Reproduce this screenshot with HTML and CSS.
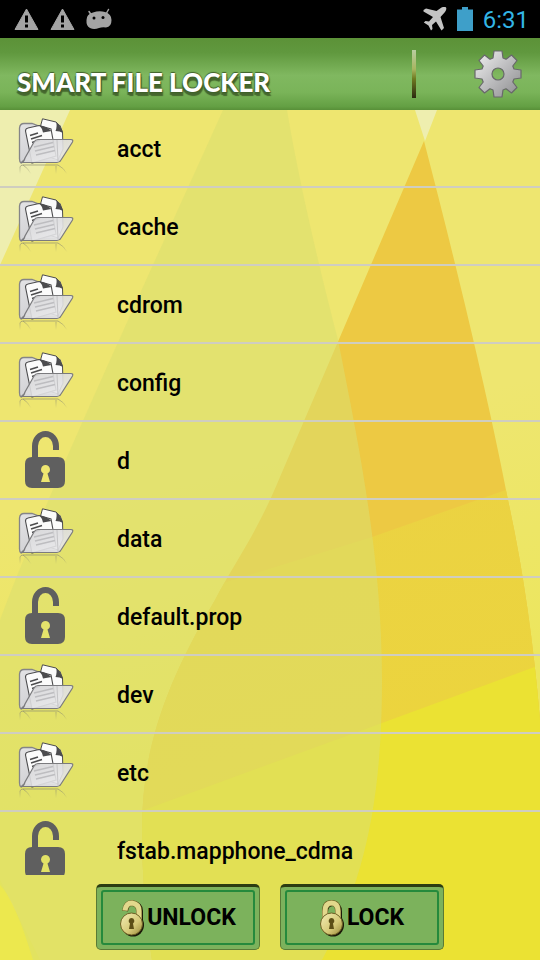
FILE: index.html
```html
<!DOCTYPE html>
<html lang="en">
<head>
    <meta charset="UTF-8">
    <meta name="viewport" content="width=device-width, initial-scale=1">
    <title>Smart File Locker</title>
    <link rel="stylesheet" href="styles.css">
</head>
<body>
    <svg class="defs" width="0" height="0" aria-hidden="true">
        <defs>
            <linearGradient id="folderBack" x1="0" y1="0" x2="1" y2="1">
                <stop offset="0" stop-color="#e4e4e6"/>
                <stop offset="1" stop-color="#c4c4c8"/>
            </linearGradient>
            <linearGradient id="folderFront" x1="0" y1="0" x2="1" y2="1">
                <stop offset="0" stop-color="#d2d2d4"/>
                <stop offset="1" stop-color="#ececee"/>
            </linearGradient>
            <linearGradient id="gold" x1="0" y1="0" x2="1" y2="1">
                <stop offset="0" stop-color="#f3edb4"/>
                <stop offset="0.6" stop-color="#d6c977"/>
                <stop offset="1" stop-color="#978838"/>
            </linearGradient>
            <linearGradient id="steel" x1="0" y1="0" x2="1" y2="1">
                <stop offset="0" stop-color="#f2f2f2"/>
                <stop offset="0.5" stop-color="#bdbdbf"/>
                <stop offset="1" stop-color="#8c8c8e"/>
            </linearGradient>
            <linearGradient id="fadeOut" x1="0" y1="0" x2="0" y2="1">
                <stop offset="0" stop-color="#8c8c70" stop-opacity="0.7"/>
                <stop offset="1" stop-color="#8c8c70" stop-opacity="0"/>
            </linearGradient>
        </defs>
        <symbol id="folder" viewBox="0 0 58 60">
            <path d="M3 45 Q1.500 44 1.500 41 V10 Q2 5.500 6 5.500 H14 L21 8 H42 V43 H5Z" fill="url(#folderBack)" stroke="#858588" stroke-width="1.300"/>
            <path d="M24.500 0.800 L38 4 Q43 7 44.500 14 L45 31 L40 42 L28 38 L22 10Z" fill="#fbfbfb" stroke="#4c4c4e" stroke-width="1"/>
            <path d="M38 4 Q43 8 45 15 Q42 13 37.500 13 Q39.500 8 38 4Z" fill="#4c4c4e"/>
            <path d="M7.500 13 Q7.500 10.500 10 10 L21 7.500 L33 11 L38 38 L14 45Z" fill="#fbfbfb" stroke="#4c4c4e" stroke-width="1.100"/>
            <path d="M21.500 7.500 Q28 8 33.500 13 L25 14.500 Q24 10 21.500 7.500Z" fill="#4c4c4e"/>
            <path d="M12 17.500 L20 15 M13 21 L24 17.500 M14 24.500 L22 22" stroke="#4c4c4e" stroke-width="1.500"/>
            <path d="M3 45 Q6 44 7 40 L16 24 Q17.500 21.500 20 21.500 H53 Q55.500 21.500 54.500 24 L43 42 Q41.500 44.500 39 44.500 H4Z" fill="url(#folderFront)" fill-opacity="0.900" stroke="#7b7b7e" stroke-width="1.200"/>
            <path d="M16 29 L35 24.500 M17 33 L36 28.500 M18 37 L37 32.500" stroke="#bdbdc0" stroke-width="1.400"/>
            <path d="M39 22 L40 43" stroke="#c4c4c6" stroke-width="1"/>
            <path d="M2 56 V49 Q2.500 47 5 47 Q10 50 13 56 M5 47 H40 Q46 50 49 56 M38 48 V56" fill="none" stroke="url(#fadeOut)" stroke-width="1"/>
        </symbol>
        <symbol id="unlocked" viewBox="0 0 42 58">
            <path d="M11 28 V15 A10.500 12 0 0 1 32 15 V19" fill="none" stroke="#5f5f5f" stroke-width="6"/>
            <path fill="#5f5f5f" fill-rule="evenodd" d="M8 26 H34 Q41 26 41 33 V50 Q41 57 34 57 H8 Q1 57 1 50 V33 Q1 26 8 26Z M21.500 34 A4.500 4.500 0 0 0 19.500 42.500 L17 51 H26 L23.500 42.500 A4.500 4.500 0 0 0 21.500 34Z"/>
        </symbol>
    </svg>

    <div class="status-bar">
        <div class="notifications">
            <svg width="25" height="24" viewBox="0 0 25 24" aria-hidden="true">
                <path d="M12.500 2 L24 22.500 H1Z" fill="#a4a4a4" stroke="#a4a4a4" stroke-linejoin="round"/>
                <path d="M12.500 8.500 V15.500 M12.500 17.500 V20.500" stroke="#000" stroke-width="3"/>
            </svg>
            <svg width="25" height="24" viewBox="0 0 25 24" aria-hidden="true">
                <path d="M12.500 2 L24 22.500 H1Z" fill="#a4a4a4" stroke="#a4a4a4" stroke-linejoin="round"/>
                <path d="M12.500 8.500 V15.500 M12.500 17.500 V20.500" stroke="#000" stroke-width="3"/>
            </svg>
            <svg width="26" height="24" viewBox="0 0 26 24" aria-hidden="true">
                <path d="M3 4.500 L6 9 M22.500 2.500 L20 7" stroke="#a4a4a4" stroke-width="1.500" stroke-linecap="round"/>
                <path d="M0.500 13 Q0.500 7 7 5.500 Q13 3.500 19 5 Q25.500 7 25.500 13 Q25.500 20 20 20.500 Q16 20 13 21 Q8 23 4 21 Q0 19 0.500 13Z" fill="#a4a4a4"/>
                <circle cx="8" cy="11" r="1.500"/>
                <circle cx="17" cy="10.500" r="1.500"/>
            </svg>
        </div>
        <div class="system">
            <svg width="24" height="24" viewBox="0 0 24 24" aria-hidden="true">
                <path d="M0.500 3 L3 1.500 L13.500 4 L18.500 0.500 Q22 -1 23 0.500 Q24 2 22 5 L17.500 10 L21 21 L18.500 23.500 L13 14.500 L9 18 L9.500 22 L8 23.500 L5.500 18.500 L0.800 15.500 L2.500 14 L6 14.500 L10 10 L0.500 4.500Z" fill="#c4c4c4"/>
            </svg>
            <svg width="16" height="24" viewBox="0 0 16 24" aria-hidden="true">
                <path d="M5 0 H11 V2.500 H16 V24 H0 V2.500 H5Z" fill="#3e9fc9"/>
            </svg>
            <span class="clock">6:31</span>
        </div>
    </div>

    <header class="header">
        <h1 class="title">SMART FILE LOCKER</h1>
        <span class="divider"></span>
        <button type="button" class="settings" aria-label="Settings">
            <svg width="48" height="48" viewBox="-24 -24 48 48" aria-hidden="true">
                <path fill="url(#steel)" stroke="#68686a" stroke-width="1.200" stroke-linejoin="round" fill-rule="evenodd" d="M-4 -23 H4 L5 -16 L8 -14.800 L13.500 -19 L19 -13.500 L14.800 -8 L16 -5 L23 -4 V4 L16 5 L14.800 8 L19 13.500 L13.500 19 L8 14.800 L5 16 L4 23 H-4 L-5 16 L-8 14.800 L-13.500 19 L-19 13.500 L-14.800 8 L-16 5 L-23 4 V-4 L-16 -5 L-14.800 -8 L-19 -13.500 L-13.500 -19 L-8 -14.800 L-5 -16Z M6 0 A6 6 0 1 0 -6 0 A6 6 0 1 0 6 0Z"/>
            </svg>
        </button>
    </header>

    <main class="content">
        <svg class="backdrop" viewBox="0 110 540 850" preserveAspectRatio="none" aria-hidden="true">
            <defs>
                <linearGradient id="sky" gradientUnits="userSpaceOnUse" x1="390" y1="110" x2="540" y2="680">
                    <stop offset="0.500" stop-color="#eee670"/>
                    <stop offset="1" stop-color="#ece65c"/>
                </linearGradient>
                <linearGradient id="ground" gradientUnits="userSpaceOnUse" x1="140" y1="500" x2="260" y2="900">
                    <stop offset="0" stop-color="#ebd244"/>
                    <stop offset="1" stop-color="#ecd53b"/>
                </linearGradient>
                <clipPath id="leafClip">
                    <path d="M424 141 L280 477 C256 535 236 560 215 600 C165 685 142 750 142 830 Q142 900 152 960 H540 V720 Q530 600 508 500 C490 405 455 260 424 141Z"/>
                </clipPath>
            </defs>
            <rect x="0" y="110" width="540" height="850" fill="url(#sky)"/>
            <path d="M0 110 H70 L0 265Z M415 110 H437 L425 141Z" fill="#eeeeaf"/>
            <g clip-path="url(#leafClip)">
                <rect x="100" y="110" width="440" height="850" fill="#edc943"/>
                <path d="M100 621 L372 537 L540 478 V960 H100Z" fill="url(#ground)"/>
                <path d="M100 826 L382 723 L540 665 V960 H100Z" fill="#ebe233"/>
            </g>
            <path d="M0 880 L40 960 H0Z" fill="#ece84e"/>
            <path d="M223 110 H287 Q303 205 338 340 C360 450 382 560 382 680 C382 800 365 880 322 960 H33 Q15 900 0 885 V620 C45 500 117 345 223 110Z" fill="#dade70" fill-opacity="0.550"/>
        </svg>

        <div class="panel">
            <ul class="file-list">
                <li><button type="button" class="file"><svg class="icon-folder" aria-hidden="true"><use href="#folder"/></svg><span>acct</span></button></li>
                <li><button type="button" class="file"><svg class="icon-folder" aria-hidden="true"><use href="#folder"/></svg><span>cache</span></button></li>
                <li><button type="button" class="file"><svg class="icon-folder" aria-hidden="true"><use href="#folder"/></svg><span>cdrom</span></button></li>
                <li><button type="button" class="file"><svg class="icon-folder" aria-hidden="true"><use href="#folder"/></svg><span>config</span></button></li>
                <li><button type="button" class="file"><svg class="icon-lock" aria-hidden="true"><use href="#unlocked"/></svg><span>d</span></button></li>
                <li><button type="button" class="file"><svg class="icon-folder" aria-hidden="true"><use href="#folder"/></svg><span>data</span></button></li>
                <li><button type="button" class="file"><svg class="icon-lock" aria-hidden="true"><use href="#unlocked"/></svg><span>default.prop</span></button></li>
                <li><button type="button" class="file"><svg class="icon-folder" aria-hidden="true"><use href="#folder"/></svg><span>dev</span></button></li>
                <li><button type="button" class="file"><svg class="icon-folder" aria-hidden="true"><use href="#folder"/></svg><span>etc</span></button></li>
                <li><button type="button" class="file"><svg class="icon-lock" aria-hidden="true"><use href="#unlocked"/></svg><span>fstab.mapphone_cdma</span></button></li>
            </ul>

            <div class="actions">
                <button type="button" class="action">
                    <span class="action-face">
                        <svg width="24" height="40" viewBox="0 0 24 40" aria-hidden="true">
                            <path d="M6 13 Q7 5 13 5 Q21 6 21 13 V22" fill="none" stroke="#1d1a08" stroke-width="4"/>
                            <ellipse cx="13" cy="27" rx="11" ry="11.500" fill="#1d1a08"/>
                            <path d="M5 13 Q6 5 12 5 Q19 6 19 13 V21" fill="none" stroke="#6d6124" stroke-width="6"/>
                            <path d="M5 12.500 Q6 5 12 5 Q19 6 19 13 V21" fill="none" stroke="#e2d88c" stroke-width="5"/>
                            <ellipse cx="11.500" cy="26" rx="11" ry="11" fill="url(#gold)" stroke="#6d6124"/>
                            <path d="M11.500 20 A3 3 0 0 0 10 25.500 L9 31 H14 L13 25.500 A3 3 0 0 0 11.500 20Z" fill="#5d4f16"/>
                        </svg>
                        UNLOCK
                    </span>
                </button>
                <button type="button" class="action">
                    <span class="action-face">
                        <svg width="24" height="40" viewBox="0 0 24 40" aria-hidden="true">
                            <path d="M6 22 V14 Q6 6 13 6 Q20 6 20 14 V22" fill="none" stroke="#1d1a08" stroke-width="4"/>
                            <ellipse cx="13" cy="27" rx="11" ry="11.500" fill="#1d1a08"/>
                            <path d="M5 21 V13 Q5 5 11.500 5 Q18 5 18 13 V21" fill="none" stroke="#6d6124" stroke-width="6"/>
                            <path d="M5 21 V13 Q5 5 11.500 5 Q18 5 18 13 V21" fill="none" stroke="#e2d88c" stroke-width="5"/>
                            <ellipse cx="11.500" cy="26" rx="11" ry="11" fill="url(#gold)" stroke="#6d6124"/>
                            <path d="M11.500 20 A3 3 0 0 0 10 25.500 L9 31 H14 L13 25.500 A3 3 0 0 0 11.500 20Z" fill="#5d4f16"/>
                        </svg>
                        LOCK
                    </span>
                </button>
            </div>
        </div>
    </main>
</body>
</html>
```
FILE: styles.css
```css
* {
    box-sizing: border-box;
}
body {
    margin: 0;
    height: 100vh;
    display: flex;
    flex-direction: column;
    font-family: Roboto, sans-serif;
    color: #000;
}
button {
    margin: 0;
    padding: 0;
    border: 0;
    background: none;
    font: inherit;
    color: inherit;
}
svg {
    display: block;
    flex: none;
}
.defs {
    position: absolute;
}

.status-bar {
    display: flex;
    justify-content: space-between;
    align-items: center;
    height: 38px;
    padding: 0 11px 0 14px;
    background: #000;
}
.notifications {
    display: flex;
    gap: 11px;
}
.system {
    display: flex;
    align-items: center;
    gap: 10px;
}
.clock {
    padding-top: 2px;
    font-size: 24px;
    line-height: 36px;
    color: #33b5e5;
}

.header {
    display: flex;
    align-items: center;
    height: 72px;
    padding: 0 18px 0 17px;
    background: linear-gradient(#5c9238, #60983e 20%, #80b860 52%, #7ab459 75%, #64a044 95%, #589038);
}
.title {
    flex: 1;
    margin: 0;
    padding-top: 16px;
    font-family: Lato, sans-serif;
    font-size: 26px;
    font-weight: 900;
    line-height: 30px;
    color: #fff;
    text-shadow: 1px 1px 1px #3f5f2a, 0 -1px 1px #3f5f2a, -1px 3px 1px #46682f, 1px 4px 1px #46682f;
}
.divider {
    width: 4px;
    height: 48px;
    margin-right: 58px;
    background: linear-gradient(#b9cda0, #a8b560 40%, #6e7a20 60%, #2b2a10);
}

.content {
    flex: 1;
    min-height: 0;
    display: grid;
    grid-template: minmax(0, 1fr) / minmax(0, 1fr);
}
.backdrop,
.panel {
    grid-area: 1 / 1;
    width: 100%;
    height: 100%;
}
.panel {
    display: flex;
    flex-direction: column;
    z-index: 1;
}
.file-list {
    flex: 1;
    min-height: 0;
    margin: 0;
    padding: 0;
    list-style: none;
    overflow: hidden;
}
.file {
    display: flex;
    align-items: center;
    width: 100%;
    height: 78px;
    border-bottom: 2px solid #cfcdc0;
    font-size: 23px;
    font-weight: 500;
    line-height: 30px;
    text-align: left;
}
.file span {
    padding-top: 4px;
}
.icon-folder {
    width: 58px;
    height: 60px;
    margin: 0 41px 0 18px;
}
.icon-lock {
    width: 42px;
    height: 58px;
    margin: 0 51px 0 24px;
}

.actions {
    display: flex;
    justify-content: center;
    gap: 20px;
    padding: 9px 0 10px;
}
.action {
    width: 164px;
    height: 66px;
    padding: 3px 4px 4px;
    border: 1px solid #5a7a35;
    border-top: 3px solid #2c3d12;
    border-radius: 5px;
    background: #7cb25c;
}
.action-face {
    display: flex;
    justify-content: center;
    align-items: center;
    height: 55px;
    gap: 3px;
    border: 2px solid #258a3c;
    border-radius: 3px;
    font-size: 23px;
    font-weight: 700;
    line-height: 30px;
}
```
